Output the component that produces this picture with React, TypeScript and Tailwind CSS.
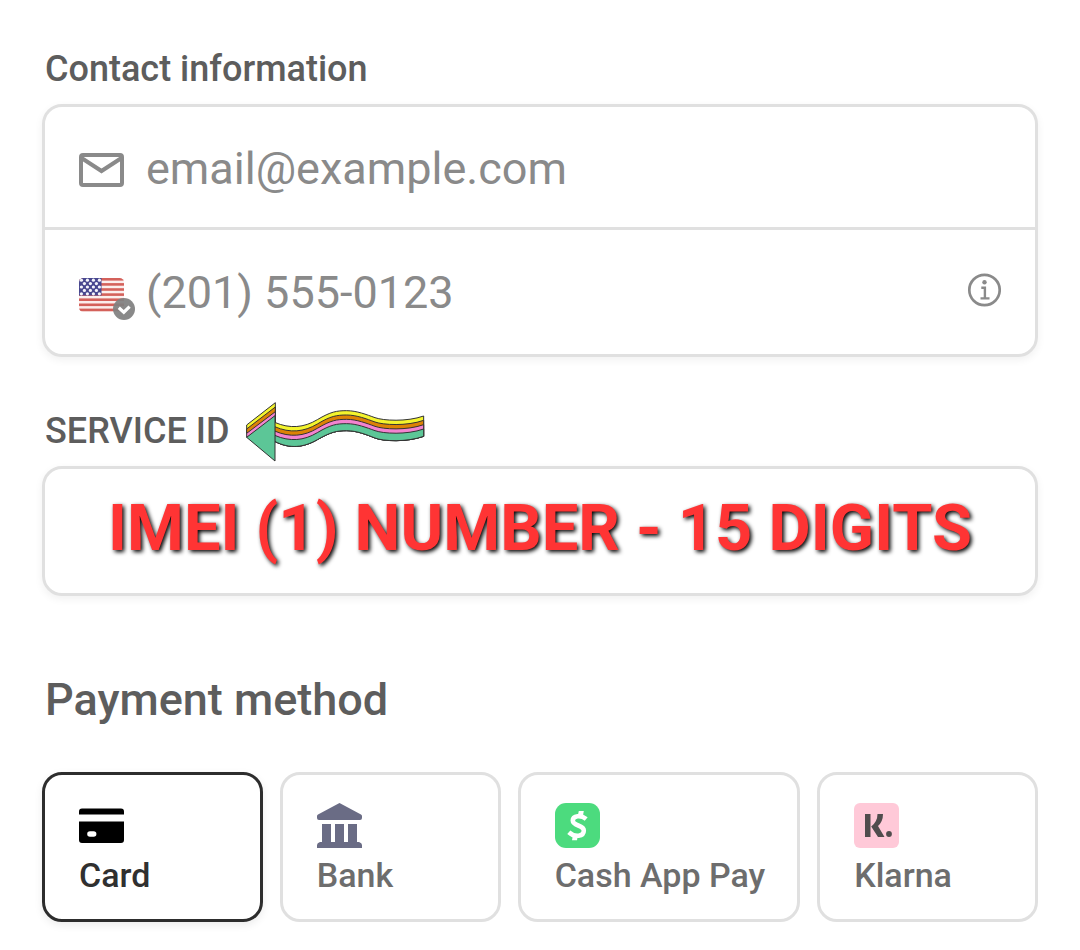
import { useState } from "react";
import type { ReactNode } from "react";

const MailIcon = () => (
  <svg viewBox="0 -3 45 37" className="h-[37px] w-[45px] shrink-0" fill="none" stroke="#8a8a8a" strokeWidth="4" aria-hidden="true">
    <rect x="2" y="2" width="41" height="30" rx="2" />
    <path d="M2.500 5 22.500 18 42.500 5" />
  </svg>
);

const stars = Array.from({ length: 5 }, (_, r) =>
  Array.from({ length: r % 2 ? 3 : 4 }, (_, c) => ({ x: 2.4 + c * 6 + (r % 2 ? 3 : 0), y: 2.2 + r * 3.4 })),
).flat();

const FlagIcon = () => (
  <svg viewBox="0 -10 58 56" className="h-[56px] w-[58px]" aria-hidden="true">
    <defs>
      <clipPath id="flag">
        <rect x="0" y="4" width="45" height="34" rx="4.5" />
      </clipPath>
    </defs>
    <g clipPath="url(#flag)">
      <rect y="4" width="45" height="34" fill="#fbeeed" />
      {[0, 1, 2, 3, 4, 5, 6].map((i) => (
        <rect key={i} y={4 + i * 5.1} width="45" height="2.6" fill="#d4615b" />
      ))}
      <rect y="4" width="22.5" height="17.5" fill="#48478f" />
      <g transform="translate(0 4)" fill="#f4f4fb">
        {stars.map((s, i) => (
          <circle key={i} cx={s.x} cy={s.y} r="1.6" />
        ))}
      </g>
    </g>
    <circle cx="45" cy="35" r="11" fill="#808080" fillOpacity="0.93" />
    <path d="m39.800 33.800 5 4.400 5.800-5.600" fill="none" stroke="#fff" strokeWidth="3.2" />
  </svg>
);

const InfoIcon = () => (
  <svg viewBox="0 0 34 38" className="h-[38px] w-[34px]" fill="none" stroke="#8a8a8a" aria-hidden="true">
    <circle cx="17.500" cy="17" r="15.2" strokeWidth="2.700" />
    <circle cx="17.500" cy="9.200" r="2.200" fill="#8a8a8a" stroke="none" />
    <path d="M14.300 14.800h3.600v10.500M13.500 25.400h9" strokeWidth="2.400" />
  </svg>
);

const bands = [
  { color: "#f4f42c", offset: 0 },
  { color: "#dd8205", offset: 13 },
  { color: "#f383d0", offset: 26 },
  { color: "#5cc697", offset: 39 },
];

const ArrowDrawing = () => (
  <svg viewBox="45 30 540 186" className="h-[62px] w-[180px]" stroke="#333" strokeWidth="3" aria-hidden="true">
    {bands.map(({ color, offset }) => (
      <path
        key={color}
        fill={color}
        transform={`translate(0 ${offset})`}
        d={`M134 97C180 117 222 113 262 89S320 62 350 62S410 74 435 83S530 96 581 78v${61 - offset}C530 ${157 - offset} 460 ${154 - offset} 435 ${144 - offset}S380 ${122 - offset} 350 ${122 - offset}S302 ${126 - offset} 262 ${149 - offset}S180 ${178 - offset} 134 ${154 - offset}Z`}
      />
    ))}
    <path fill="#f4f42c" d="M50 105 136 38V97L50 130Z" />
    <path fill="#dd8205" d="M50 117 136 51V97L50 130Z" />
    <path fill="#f383d0" d="M50 130 136 65V97L50 142Z" />
    <path fill="#5cc697" d="M50 142 135 77V213Z" />
  </svg>
);

const CardIcon = () => (
  <svg viewBox="0 0 45 45" className="size-[45px]" aria-hidden="true">
    <path d="M0 11.5V8.5Q0 5.5 3 5.5H42Q45 5.5 45 8.5V11.5Z" />
    <path fillRule="evenodd" d="M0 18.5H45V37Q45 40 42 40H3Q0 40 0 37ZM11 28.2a2.8 2.8 0 0 0 0 5.6h3.6a2.8 2.8 0 0 0 0-5.6Z" />
  </svg>
);

const BankIcon = () => (
  <svg viewBox="0 0 45 45" className="size-[45px]" fill="#6a6c85" aria-hidden="true">
    <path d="M22.5 0 44 11.5Q45 12 45 13V15Q45 17 43 17H2Q0 17 0 15V13Q0 12 1 11.5Z" />
    <path d="M5 21H14V39H18V21H27V39H31V21H40V39H42Q45 40 45 42V45H0V42Q0 40 3 39H5Z" />
  </svg>
);

const CashAppIcon = () => (
  <svg viewBox="0 0 45 45" className="size-[45px]" fill="none" aria-hidden="true">
    <rect width="45" height="45" rx="11" fill="#4cdb7e" />
    <path d="M31.200 16C26 11.800 17.800 12.500 17.800 17.600C17.800 23.500 28.800 21.500 28.800 27.500C28.800 33.500 20 34.800 13.800 29.200" stroke="#fff" strokeWidth="4.600" />
    <path d="M23.800 8H28.800L27.800 13.500H22.600ZM18 32H23L22 37.200H17Z" fill="#fff" />
  </svg>
);

const KlarnaIcon = () => (
  <svg viewBox="0 0 45 45" className="size-[45px]" fill="#504c4d" aria-hidden="true">
    <rect width="45" height="45" rx="6" fill="#ffc9d8" />
    <path d="M11 11H16.5V34H11ZM23.5 11H29Q29 18.500 24 23L30.500 34H24L17.200 23.500Q23.500 18.500 23.500 11Z" />
    <circle cx="35" cy="31" r="2.9" />
  </svg>
);

const methods: { name: string; icon: ReactNode }[] = [
  { name: "Card", icon: <CardIcon /> },
  { name: "Bank", icon: <BankIcon /> },
  { name: "Cash App Pay", icon: <CashAppIcon /> },
  { name: "Klarna", icon: <KlarnaIcon /> },
];

export default function App() {
  const [selected, setSelected] = useState("Card");

  return (
    <main className="bg-white px-[42px] pt-12 pb-7 font-['Roboto',sans-serif] text-[#5d5d5d]">
      <section aria-labelledby="contact">
        <h2 id="contact" className="mb-[14px] pl-[3px] text-[36px] leading-[42px] font-medium">
          Contact information
        </h2>
        <div className="rounded-[20px] border-3 border-[#e0e0e0] shadow-[0_3px_8px_rgba(0,0,0,0.06)]">
          <div className="flex h-[123px] items-center gap-[22px] border-b-3 border-[#e0e0e0] px-[34px] pt-0.5">
            <MailIcon />
            <input
              type="email"
              aria-label="Email"
              placeholder="email@example.com"
              className="min-w-0 flex-1 text-[45px] leading-[53px] outline-none placeholder:text-[#8a8a8a]"
            />
          </div>
          <div className="flex h-[124px] items-center gap-[9px] px-[34px]">
            <button type="button" aria-label="Country: United States" className="shrink-0">
              <FlagIcon />
            </button>
            <input
              type="tel"
              aria-label="Phone number"
              placeholder="(201) 555-0123"
              className="min-w-0 flex-1 text-[45px] leading-[53px] outline-none placeholder:text-[#8a8a8a]"
            />
            <button type="button" aria-label="Phone number information" className="shrink-0">
              <InfoIcon />
            </button>
          </div>
        </div>
      </section>

      <section className="mt-[43px]">
        <div className="mb-1 flex h-[62px] items-center gap-4 pl-[3px]">
          <label htmlFor="service" className="text-[36px] leading-[42px] font-medium">
            SERVICE ID
          </label>
          <ArrowDrawing />
        </div>
        <input
          id="service"
          type="text"
          inputMode="numeric"
          placeholder="IMEI (1) NUMBER - 15 DIGITS"
          className="block h-[130px] w-full rounded-[20px] border-3 border-[#e0e0e0] pb-[6px] text-center text-[65px] leading-[100px] font-bold shadow-[0_3px_8px_rgba(0,0,0,0.06)] outline-none placeholder:overflow-visible placeholder:leading-[100px] placeholder:text-[#ff3434] placeholder:[text-shadow:2px_2px_4px_#000]"
        />
      </section>

      <section className="mt-[77px]" aria-labelledby="payment">
        <h2 id="payment" className="mb-[46px] pl-[3px] text-[45px] leading-[53px] font-medium">
          Payment method
        </h2>
        <div className="flex gap-[17px]">
          {methods.map(({ name, icon }) => (
            <button
              key={name}
              type="button"
              aria-pressed={selected === name}
              onClick={() => setSelected(name)}
              className={
                "flex h-[150px] flex-1 flex-col items-start rounded-[20px] border-3 pt-7 pr-8 pl-[34px] text-[34px] leading-[38px] font-medium whitespace-nowrap " +
                (selected === name
                  ? "border-[#2d2d2d] text-[#303030] shadow-[0_3px_8px_rgba(0,0,0,0.08)]"
                  : "border-[#e0e0e0] text-[#6d6d6d]")
              }
            >
              {icon}
              <span className="mt-2">{name}</span>
            </button>
          ))}
        </div>
      </section>
    </main>
  );
}
